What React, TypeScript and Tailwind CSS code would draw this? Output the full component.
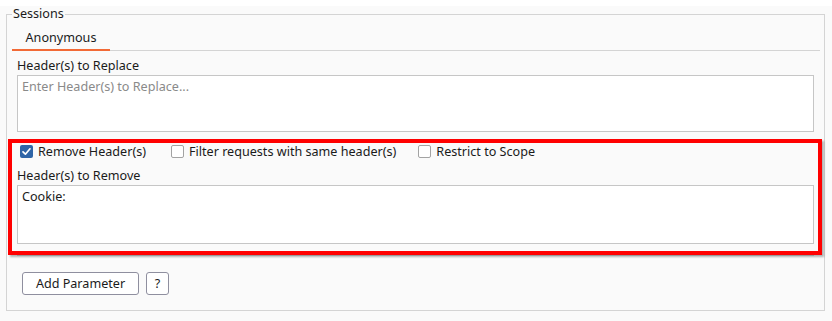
import React from "react"

function Checkbox({ checked }: { checked?: boolean }) {
  if (checked) {
    return (
      <span className="flex h-[13px] w-[13px] items-center justify-center rounded-[2px] bg-[#2f65a7]">
        <svg viewBox="0 0 13 13" className="h-[13px] w-[13px]">
          <path d="M3 6.8 L5.4 9.2 L10 3.8" fill="none" stroke="#ffffff" strokeWidth="1.7" strokeLinecap="round" strokeLinejoin="round" />
        </svg>
      </span>
    )
  }
  return <span className="h-[13px] w-[13px] rounded-[2px] border border-[#a3a3a3] bg-white" />
}

export default function App() {
  return (
    <div
      className="relative h-[321px] w-[832px] bg-[#fafafa] px-[6px] text-[12.6px] text-[#1b1b1b]"
      style={{ fontFamily: '"Noto Sans", "Open Sans", sans-serif' }}
    >
      <fieldset className="mt-[6px] h-[305px] w-[819px] border border-[#d4d4d4]">
        <legend className="ml-[5px] px-px leading-[16px]">Sessions</legend>

        <div className="ml-[5px] mr-[4px] flex h-[29px] border-b border-[#d4d4d4]">
          <div className="-mb-px flex w-[98px] justify-center border-b-2 border-[#f26a36] pt-[8px] leading-[16px]">
            Anonymous
          </div>
        </div>

        <div className="px-[10px]">
          <div className="mt-[7px] leading-[16px]">Header(s) to Replace</div>
          <div className="mt-px h-[57px] border border-[#c6c6c6] bg-white px-[4px] pt-[3px] leading-[16px] text-[#8a8a8a]">
            Enter Header(s) to Replace...
          </div>

          <div className="mt-[10px] flex h-[20px] items-center pl-[3px]">
            <label className="flex items-center gap-[5px]">
              <Checkbox checked />
              <span>Remove Header(s)</span>
            </label>
            <label className="ml-[25px] flex items-center gap-[5px]">
              <Checkbox />
              <span>Filter requests with same header(s)</span>
            </label>
            <label className="ml-[22px] flex items-center gap-[5px]">
              <Checkbox />
              <span>Restrict to Scope</span>
            </label>
          </div>

          <div className="mt-[6px] leading-[16px]">Header(s) to Remove</div>
          <div className="mt-px h-[59px] border border-[#c6c6c6] bg-white px-[4px] pt-[3px] leading-[16px]">
            Cookie:
          </div>

          <div className="mt-[11px] h-px bg-[#d4d4d4]" />

          <div className="ml-[5px] mt-[16px] flex gap-[7px]">
            <button className="h-[23px] w-[117px] rounded-[3px] border border-[#8f8f9f] bg-white leading-[16px]">
              Add Parameter
            </button>
            <button className="h-[23px] w-[23px] rounded-[3px] border border-[#8f8f9f] bg-white leading-[16px]">
              ?
            </button>
          </div>
        </div>
      </fieldset>

      {/* annotation highlight */}
      <div className="pointer-events-none absolute left-[8px] top-[133px] h-[116px] w-[814px] border-4 border-[#ff0000] shadow-[2px_2px_2px_rgba(0,0,0,0.3)]" />
    </div>
  )
}
